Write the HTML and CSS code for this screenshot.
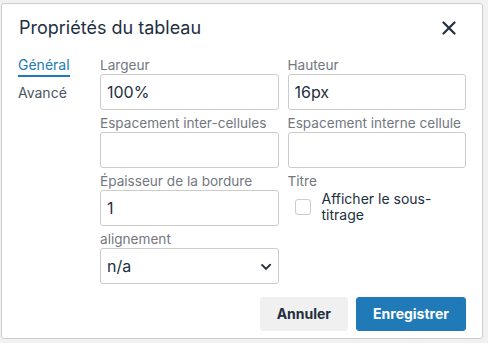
FILE: index.html
```html
<!DOCTYPE html>
<html lang="fr">
<head>
    <meta charset="UTF-8">
    <meta name="viewport" content="width=device-width, initial-scale=1.0">
    <title>Propriétés du tableau</title>
    <link rel="stylesheet" href="styles.css">
</head>
<body>
    <div class="dialog">
        <div class="dialog-header">
            <div class="dialog-title">Propriétés du tableau</div>
            <button class="close-btn" title="Fermer">
                <svg width="14" height="14" viewBox="0 0 14 14">
                    <path d="M1.5 1.5L12.5 12.5M12.5 1.5L1.5 12.5" stroke="#222f3e" stroke-width="2.2" stroke-linecap="round" fill="none"/>
                </svg>
            </button>
        </div>

        <div class="dialog-body">
            <div class="tabs">
                <div class="tab active">Général</div>
                <div class="tab">Avancé</div>
            </div>

            <div class="panel">
                <div class="field">
                    <label>Largeur</label>
                    <input type="text" class="text-input" value="100%">
                </div>
                <div class="field">
                    <label>Hauteur</label>
                    <input type="text" class="text-input" value="16px">
                </div>
                <div class="field">
                    <label>Espacement inter-cellules</label>
                    <input type="text" class="text-input">
                </div>
                <div class="field">
                    <label>Espacement interne cellule</label>
                    <input type="text" class="text-input">
                </div>
                <div class="field">
                    <label>Épaisseur de la bordure</label>
                    <input type="text" class="text-input" value="1">
                </div>
                <div class="field">
                    <label>Titre</label>
                    <div class="checkbox-row">
                        <span class="checkbox"></span>
                        <span class="checkbox-label">Afficher le sous-titrage</span>
                    </div>
                </div>
                <div class="field">
                    <label>alignement</label>
                    <div class="select">
                        <span>n/a</span>
                        <svg width="24" height="24" viewBox="0 0 24 24">
                            <path d="M8.7 10.2a1 1 0 0 0-1.4 1.4l4 4c.4.4 1 .4 1.4 0l4-4a1 1 0 1 0-1.4-1.4L12 13.5l-3.3-3.3z" fill="#222f3e"/>
                        </svg>
                    </div>
                </div>
            </div>
        </div>

        <div class="dialog-footer">
            <button class="btn btn-secondary">Annuler</button>
            <button class="btn btn-primary">Enregistrer</button>
        </div>
    </div>
</body>
</html>
```

FILE: styles.css
```css
body {
    font-family: Inter, "Noto Sans", sans-serif;
    background-color: #f1f1f1;
    margin: 0;
    padding: 0;
    color: #222f3e;
}
.dialog {
    box-sizing: border-box;
    width: 482px;
    height: 336px;
    margin: 3px 0 0 1px;
    background: white;
    border: 1px solid #cccccc;
    border-radius: 3px;
    display: flex;
    flex-direction: column;
}
.dialog-header {
    display: flex;
    justify-content: space-between;
    align-items: center;
    padding: 7px 16px 0 17px;
}
.dialog-title {
    font-size: 18px;
    line-height: 26px;
}
.close-btn {
    width: 34px;
    height: 34px;
    border: none;
    background: none;
    padding: 0;
    display: flex;
    align-items: center;
    justify-content: center;
}
.dialog-body {
    display: flex;
    padding: 11px 16px 4px 16px;
}
.tabs {
    width: 82px;
    flex-shrink: 0;
    display: flex;
    flex-direction: column;
    align-items: flex-start;
}
.tab {
    font-size: 14px;
    line-height: 18px;
    color: #4b5562;
    padding-bottom: 1px;
    border-bottom: 2px solid transparent;
    margin-bottom: 7px;
}
.tab.active {
    color: #207ab7;
    border-bottom-color: #207ab7;
}
.panel {
    flex: 1;
    display: grid;
    grid-template-columns: 1fr 1fr;
    column-gap: 9px;
    row-gap: 4px;
}
.field {
    display: flex;
    flex-direction: column;
    min-width: 0;
}
.field label {
    font-size: 13.6px;
    line-height: 18px;
    color: #727880;
    white-space: nowrap;
}
.text-input {
    box-sizing: border-box;
    height: 36px;
    width: 100%;
    font-family: inherit;
    font-size: 16px;
    color: #222f3e;
    padding: 5px 6px;
    border: 1px solid #cccccc;
    border-radius: 3px;
    outline: none;
}
.checkbox-row {
    display: flex;
    align-items: center;
    gap: 11px;
    padding: 1px 20px 0 7px;
}
.checkbox {
    box-sizing: border-box;
    width: 16px;
    height: 16px;
    flex-shrink: 0;
    border: 1px solid #cccccc;
    border-radius: 3px;
}
.checkbox-label {
    font-size: 14px;
    line-height: 16px;
}
.select {
    box-sizing: border-box;
    height: 36px;
    display: flex;
    align-items: center;
    justify-content: space-between;
    padding: 0 0 0 6px;
    border: 1px solid #cccccc;
    border-radius: 3px;
    font-size: 16px;
}
.dialog-footer {
    margin-top: auto;
    display: flex;
    justify-content: flex-end;
    gap: 8px;
    padding: 8px 16px 7px 16px;
}
.btn {
    font-family: inherit;
    font-size: 14px;
    font-weight: bold;
    line-height: 24px;
    padding: 4px 16px;
    border-radius: 3px;
    cursor: pointer;
}
.btn-secondary {
    background: #f0f0f0;
    border: 1px solid #f0f0f0;
    color: #222f3e;
}
.btn-primary {
    background: #207ab7;
    border: 1px solid #207ab7;
    color: white;
}
```
